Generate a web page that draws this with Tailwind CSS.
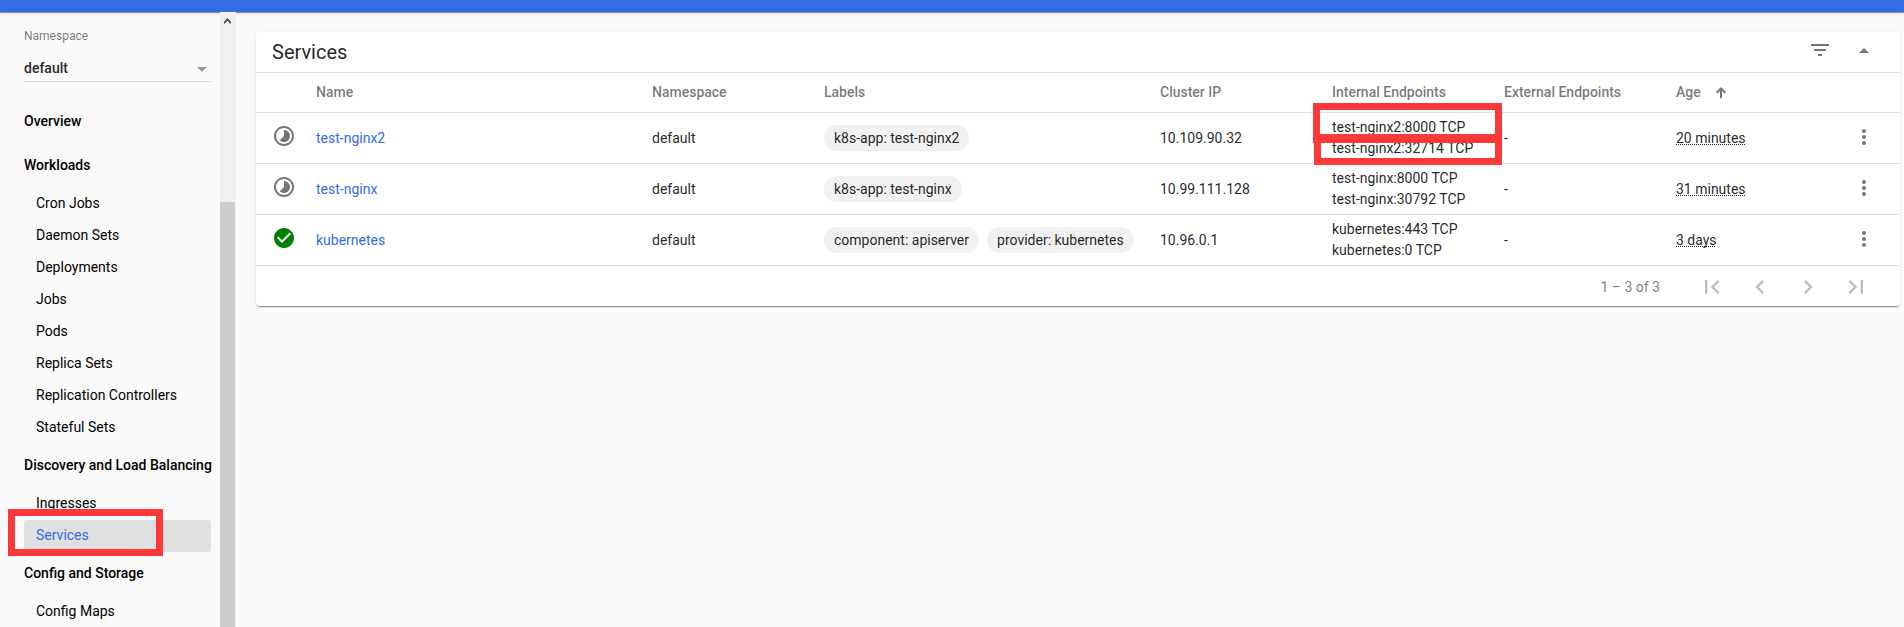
<!DOCTYPE html>
<html lang="en">
<head>
<meta charset="utf-8">
<title>Services</title>
<script src="https://cdn.jsdelivr.net/npm/@tailwindcss/browser@4"></script>
</head>
<body class="relative flex h-[627px] w-[1904px] flex-col overflow-hidden bg-[#fafafa] font-[Roboto,sans-serif] text-sm text-black/87">
<svg class="hidden">
  <symbol id="pending" viewBox="0 0 24 24"><path d="M16.24 7.76C15.07 6.59 13.54 6 12 6v6l-4.24 4.24c2.34 2.34 6.14 2.34 8.49 0 2.34-2.34 2.34-6.14-.01-8.48zM12 2C6.48 2 2 6.48 2 12s4.48 10 10 10 10-4.48 10-10S17.52 2 12 2zm0 18c-4.42 0-8-3.58-8-8s3.58-8 8-8 8 3.580 8 8-3.580 8-8 8z"/></symbol>
  <symbol id="ok" viewBox="0 0 24 24"><path d="M12 2C6.48 2 2 6.48 2 12s4.48 10 10 10 10-4.480 10-10S17.520 2 12 2zm-2 15l-5-5 1.410-1.410L10 14.170l7.590-7.590L19 8l-9 9z"/></symbol>
  <symbol id="more" viewBox="0 0 24 24"><path d="M12 8c1.100 0 2-.9 2-2s-.9-2-2-2-2 .9-2 2 .9 2 2 2zm0 2c-1.100 0-2 .9-2 2s.9 2 2 2 2-.9 2-2-.9-2-2-2zm0 6c-1.100 0-2 .9-2 2s.9 2 2 2 2-.9 2-2-.9-2-2-2z"/></symbol>
</svg>

<header class="relative z-10 h-3 shrink-0 bg-[#326de6] shadow-[0_1px_0_#8f9398,0_2px_2px_rgba(0,0,0,0.12)]"></header>

<div class="flex min-h-0 flex-1">
  <nav class="h-full w-[220px] shrink-0 overflow-hidden pl-6 pr-[9px] text-black">
    <div class="flex h-[70px] flex-col border-b border-[#dcdcdc] pt-4">
      <div class="text-xs leading-4 text-black/54">Namespace</div>
      <div class="mt-[14px] flex items-center justify-between pr-1 font-medium leading-5 text-black/87"><span>default</span>
        <svg class="mt-[2px] h-[5px] w-[10px] fill-[#999]" viewBox="0 0 10 5"><path d="M0 0h10L5 5z"/></svg></div>
    </div>
    <div class="mt-[18px] flex h-11 items-center whitespace-nowrap pb-0.5 font-medium">Overview</div>
    <div class="flex h-11 items-center whitespace-nowrap pb-0.5 font-medium">Workloads</div>
    <div class="flex h-8 items-center pb-0.5 pl-3">Cron Jobs</div>
    <div class="flex h-8 items-center pb-0.5 pl-3">Daemon Sets</div>
    <div class="flex h-8 items-center pb-0.5 pl-3">Deployments</div>
    <div class="flex h-8 items-center pb-0.5 pl-3">Jobs</div>
    <div class="flex h-8 items-center pb-0.5 pl-3">Pods</div>
    <div class="flex h-8 items-center pb-0.5 pl-3">Replica Sets</div>
    <div class="flex h-8 items-center pb-0.5 pl-3">Replication Controllers</div>
    <div class="flex h-8 items-center pb-0.5 pl-3">Stateful Sets</div>
    <div class="flex h-11 items-center whitespace-nowrap pb-0.5 font-medium">Discovery and Load Balancing</div>
    <div class="flex h-8 items-center pb-0.5 pl-3">Ingresses</div>
    <div class="flex h-8 items-center rounded-[3px] bg-[#e0e0e0] pb-0.5 pl-3 text-[#326de6]">Services</div>
    <div class="flex h-11 items-center whitespace-nowrap pb-0.5 font-medium">Config and Storage</div>
    <div class="flex h-8 items-center pb-0.5 pl-3">Config Maps</div>
  </nav>
  <div class="relative z-20 flex h-full w-4 shrink-0 flex-col bg-[#f0f0f0]">
    <svg class="ml-1 mt-[6px] h-[6px] w-[7px]" viewBox="0 0 7 6"><path d="M0 5.200L3.500 1.400 7 5.200" fill="none" stroke="#505050" stroke-width="1.900"/></svg>
    <div class="mt-[178px] w-[15px] flex-1 bg-[#cdcdcd]"></div>
  </div>

  <main class="flex-1 pl-5 pr-1 pt-5">
    <section class="h-[274px] rounded-[4px] bg-white shadow-[0_2px_1px_-1px_rgba(0,0,0,0.4),0_1px_3px_rgba(0,0,0,0.12)]">
      <div class="flex h-[41px] items-center border-b border-[#e0e0e0] pl-4 pr-[31px]">
        <h1 class="flex-1 text-xl leading-6">Services</h1>
        <svg class="-mt-1 mr-[30px] h-3 w-[18px] fill-[#757575]" viewBox="3 6 18 12"><path d="M10 18h4v-2h-4v2zM3 6v2h18V6H3zm3 7h12v-2H6v2z"/></svg>
        <svg class="-mt-1 h-[5px] w-[10px] fill-[#757575]" viewBox="0 0 10 5"><path d="M0 5L5 0l5 5z"/></svg>
      </div>

      <div class="grid h-10 grid-cols-[60px_336px_172px_336px_172px_172px_172px_172px_1fr] items-center border-b border-[#e0e0e0] pb-px font-medium text-black/54">
        <span></span><span>Name</span><span>Namespace</span><span>Labels</span><span>Cluster IP</span><span>Internal Endpoints</span><span>External Endpoints</span>
        <span class="flex items-center">Age<svg class="ml-[15px] h-[11px] w-[10px]" viewBox="0 0 10 11"><path d="M5 11V1.500M.7 5.700L5 1.400l4.300 4.300" fill="none" stroke="#757575" stroke-width="2"/></svg></span>
      </div>

      <div class="grid h-[51px] grid-cols-[60px_336px_172px_336px_172px_172px_172px_172px_1fr] items-center border-b border-[#e0e0e0]">
        <svg class="-mt-1 ml-4 size-6 fill-[#757575]"><use href="#pending"/></svg>
        <span class="text-[#326de6]">test-nginx2</span><span>default</span>
        <span class="flex gap-2"><span class="rounded-full bg-[#f1f1f1] px-[10px] py-[3px]">k8s-app: test-nginx2</span></span>
        <span>10.109.90.32</span>
        <span class="leading-[21px]">test-nginx2:8000 TCP<br>test-nginx2:32714 TCP</span><span>-</span>
        <span><span class="underline decoration-dotted decoration-1 underline-offset-1 [text-decoration-skip-ink:none]">20 minutes</span></span>
        <svg class="-mt-[2px] ml-1 size-6 fill-[#757575]"><use href="#more"/></svg>
      </div>
      <div class="grid h-[51px] grid-cols-[60px_336px_172px_336px_172px_172px_172px_172px_1fr] items-center border-b border-[#e0e0e0]">
        <svg class="-mt-1 ml-4 size-6 fill-[#757575]"><use href="#pending"/></svg>
        <span class="text-[#326de6]">test-nginx</span><span>default</span>
        <span class="flex gap-2"><span class="rounded-full bg-[#f1f1f1] px-[10px] py-[3px]">k8s-app: test-nginx</span></span>
        <span>10.99.111.128</span>
        <span class="leading-[21px]">test-nginx:8000 TCP<br>test-nginx:30792 TCP</span><span>-</span>
        <span><span class="underline decoration-dotted decoration-1 underline-offset-1 [text-decoration-skip-ink:none]">31 minutes</span></span>
        <svg class="-mt-[2px] ml-1 size-6 fill-[#757575]"><use href="#more"/></svg>
      </div>
      <div class="grid h-[51px] grid-cols-[60px_336px_172px_336px_172px_172px_172px_172px_1fr] items-center border-b border-[#e0e0e0]">
        <svg class="-mt-1 ml-4 size-6 fill-[#008000]"><use href="#ok"/></svg>
        <span class="text-[#326de6]">kubernetes</span><span>default</span>
        <span class="flex gap-2"><span class="rounded-full bg-[#f1f1f1] px-[10px] py-[3px]">component: apiserver</span><span class="rounded-full bg-[#f1f1f1] px-[10px] py-[3px]">provider: kubernetes</span></span>
        <span>10.96.0.1</span>
        <span class="leading-[21px]">kubernetes:443 TCP<br>kubernetes:0 TCP</span><span>-</span>
        <span><span class="underline decoration-dotted decoration-1 underline-offset-1 [text-decoration-skip-ink:none]">3 days</span></span>
        <svg class="-mt-[2px] ml-1 size-6 fill-[#757575]"><use href="#more"/></svg>
      </div>

      <div class="flex h-10 items-center justify-end pr-[30px] pt-px text-black/54">
        <span class="mr-[38px]">1 – 3 of 3</span>
        <div class="mt-px flex items-center gap-5 fill-black/26">
          <svg class="size-7" viewBox="0 0 24 24"><path d="M18.410 16.590L13.820 12l4.590-4.590L17 6l-6 6 6 6zM6 6h2v12H6z"/></svg>
          <svg class="size-7" viewBox="0 0 24 24"><path d="M15.410 7.410L14 6l-6 6 6 6 1.410-1.410L10.830 12z"/></svg>
          <svg class="size-7" viewBox="0 0 24 24"><path d="M10 6L8.590 7.410 13.170 12l-4.580 4.590L10 18l6-6z"/></svg>
          <svg class="size-7" viewBox="0 0 24 24"><path d="M5.590 7.410L10.180 12l-4.590 4.590L7 18l6-6-6-6zM16 6h2v12h-2z"/></svg>
        </div>
      </div>
    </section>
  </main>
</div>

<!-- Highlight frames -->
<div class="absolute left-2 top-[509px] z-30 h-[47px] w-[155px] border-7 border-[#fc3838]"></div>
<div class="absolute left-[1313px] top-[103px] z-30 h-10 w-[189px] border-7 border-b-9 border-[#fc3838]"></div>
<div class="absolute left-[1314px] top-[136px] z-30 h-[29px] w-[188px] border-7 border-[#fc3838]"></div>
</body>
</html>
